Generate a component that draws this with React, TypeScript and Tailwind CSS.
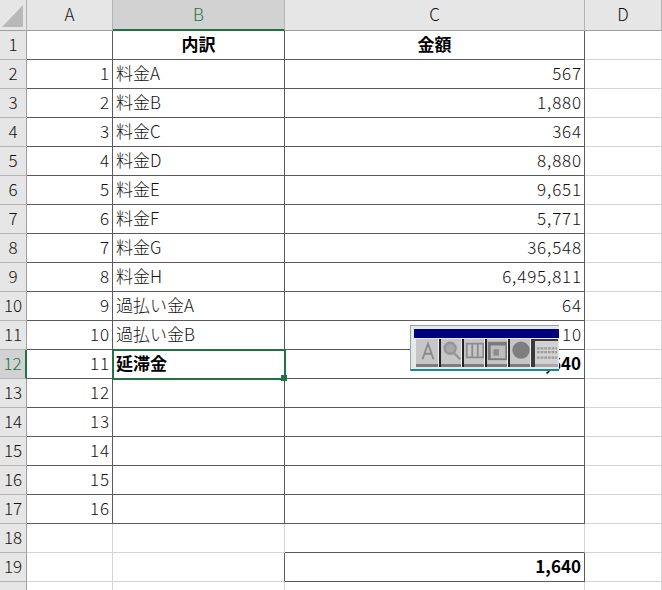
const FONT = "font-['Noto_Sans_CJK_JP','Noto_Sans',sans-serif]";

const labels = ['料金A','料金B','料金C','料金D','料金E','料金F','料金G','料金H','過払い金A','過払い金B'];
const amounts = ['567','1,880','364','8,880','9,651','5,771','36,548','6,495,811','64','10'];

function ColHead({ t, active }: { t: string; active?: boolean }) {
  return (
    <div className={`flex items-center justify-center border-r border-[#b4b4b4] pb-[2px] text-[17px] font-light ${active ? 'border-b-2 border-b-[#217346] bg-[#d2d2d2] text-[#1f7246]' : 'border-b border-b-[#9f9f9f] bg-[#e6e6e6] text-[#111]'}`}>
      {t}
    </div>
  );
}

function RowHead({ n, active }: { n: number; active?: boolean }) {
  return (
    <div className={`flex items-start justify-center border-b border-[#b4b4b4] text-[17px] font-light leading-[26px] ${active ? 'border-r-2 border-r-[#217346] bg-[#d2d2d2] text-[#1f7246]' : 'border-r border-r-[#9f9f9f] bg-[#e6e6e6] text-[#111]'}`}>
      {n}
    </div>
  );
}

function Cell({ children, dark, rightDark, bottomDark, align, bold }: { children?: React.ReactNode; dark?: boolean; rightDark?: boolean; bottomDark?: boolean; align?: 'r' | 'c' | 'l'; bold?: boolean }) {
  const r = dark || rightDark ? 'border-r-[#5a5a5a]' : 'border-r-[#d4d4d4]';
  const b = dark || bottomDark ? 'border-b-[#5a5a5a]' : 'border-b-[#d4d4d4]';
  const a = align === 'r' ? (bold ? 'justify-end pr-[3px]' : 'justify-end pr-[2px]') : align === 'c' ? 'justify-center' : 'justify-start pl-[3px]';
  const w = bold ? 'font-bold text-black' : `font-light text-[#111] ${align === 'r' ? 'tracking-[0.85px]' : ''}`;
  return (
    <div className={`flex items-start overflow-hidden whitespace-nowrap border-r border-b bg-white text-[17px] leading-[26px] ${r} ${b} ${a} ${w}`}>
      {children}
    </div>
  );
}

function Btn({ children, first, last }: { children: React.ReactNode; first?: boolean; last?: boolean }) {
  return (
    <div className={`relative flex h-[28px] items-start justify-center overflow-hidden ${last ? 'w-[27px] border-l-[4px] border-t-2 border-[#3a3a3a] bg-[#d2d2d2]' : first ? 'w-[23px] bg-[#c6c6c6]' : 'w-[23px] border-l-2 border-[#222] bg-[#c6c6c6]'}`}>
      <div className="mt-[1px] blur-[0.6px]">{children}</div>
      <div className={`absolute bottom-0 left-0 right-0 h-[3px] ${last ? 'bg-[#a8a8a8]' : 'bg-[#7c7c7c]'}`} />
      {!last && <div className="absolute bottom-0 right-0 top-0 w-[1px] bg-[#eeeeee]" />}
    </div>
  );
}

function Toolbar() {
  return (
    <div className="absolute left-[410px] top-[325px] z-10 flex h-[46px] w-[149px] flex-col border-b-2 border-l border-t border-[#8ea6a6] border-b-[#148a8a] bg-[#e8e8e8] pl-[3px] pt-[3px]">
      <div className="h-[9px] w-full shrink-0 bg-[#00007f]" />
      <div className="mt-[1px] flex items-start pl-[2px]">
        <Btn first>
          <svg viewBox="0 0 24 24" className="h-[22px] w-[22px]" fill="none" stroke="#8a8a8a" strokeWidth="2"><path d="M6 21 12 4l6 17M8 15h8" /></svg>
        </Btn>
        <Btn>
          <svg viewBox="0 0 24 24" className="h-[22px] w-[22px]" fill="none" stroke="#959595" strokeWidth="2.5"><circle cx="10" cy="9" r="6" fill="#a8a8a8" /><path d="m14 14 7 7" /></svg>
        </Btn>
        <Btn>
          <svg viewBox="0 0 24 24" className="h-[22px] w-[22px]" fill="none" stroke="#8c8c8c" strokeWidth="2"><path d="M3 4h18v15H3zM9 4v15M15 4v15" /></svg>
        </Btn>
        <Btn>
          <svg viewBox="0 0 24 24" className="h-[22px] w-[22px]"><path fill="#7a7a7a" d="M1 2h22v20H1z" /><path fill="#bdbdbd" d="M4 6h16v14H4z" /><path fill="#8c8c8c" d="M7 10h6v7H7z" /></svg>
        </Btn>
        <Btn>
          <svg viewBox="0 0 24 24" className="h-[22px] w-[22px]"><circle cx="12" cy="11" r="9.5" fill="#7e7e7e" /></svg>
        </Btn>
        <Btn last>
          <svg viewBox="0 0 24 24" className="h-[22px] w-[22px]" fill="none" stroke="#9c9c9c" strokeWidth="2.5" strokeDasharray="3 1"><path d="M1 7h22M1 11h22M1 17h22" /></svg>
        </Btn>
      </div>
    </div>
  );
}

export default function App() {
  const rows = [];
  for (let r = 1; r <= 20; r++) {
    const tableRow = r <= 17;
    const isLabel = r >= 2 && r <= 11;
    rows.push(
      <RowHead key={`h${r}`} n={r} active={r === 12} />,
      <Cell key={`a${r}`} dark={tableRow} align="r">{r >= 2 && r <= 17 ? r - 1 : ''}</Cell>,
      r === 12 ? (
        <div key="b12" className="relative flex items-start whitespace-nowrap border-r border-b border-r-[#5a5a5a] border-b-[#5a5a5a] bg-white pl-[3px] text-[17px] font-bold leading-[26px] text-black">
          延滞金
          <div className="absolute bottom-[-2px] left-[-1px] right-[-2px] top-[-1px] border-2 border-[#217346]" />
          <div className="absolute bottom-[-3px] right-[-3px] h-[6px] w-[6px] bg-[#217346]" />
        </div>
      ) : (
        <Cell key={`b${r}`} dark={tableRow} rightDark={r === 19} align={r === 1 ? 'c' : 'l'} bold={r === 1}>
          {r === 1 ? '内訳' : isLabel ? labels[r - 2] : ''}
        </Cell>
      ),
      <Cell key={`c${r}`} dark={tableRow || r === 19} bottomDark={r === 18} align={r === 1 ? 'c' : 'r'} bold={r === 1 || r === 12 || r === 19}>
        {r === 1 ? '金額' : isLabel ? amounts[r - 2] : r === 12 || r === 19 ? '1,640' : ''}
      </Cell>,
      <Cell key={`d${r}`} />,
    );
  }
  return (
    <div className={`relative h-[590px] w-[662px] overflow-hidden bg-white ${FONT}`}>
      <div className="grid h-full w-full grid-cols-[27px_86px_172px_300px_1fr] grid-rows-[31px_repeat(19,29px)_1fr]">
        <div className="relative border-r border-b border-r-[#b4b4b4] border-b-[#9f9f9f] bg-[#e6e6e6]">
          <svg viewBox="0 0 22 22" className="absolute bottom-[3px] right-[3px] h-[22px] w-[21px]" preserveAspectRatio="none"><path d="M22 0v22H0z" fill="#b8b8b8" /></svg>
        </div>
        <ColHead t="A" />
        <ColHead t="B" active />
        <ColHead t="C" />
        <ColHead t="D" />
        {rows}
      </div>
      <Toolbar />
    </div>
  );
}
